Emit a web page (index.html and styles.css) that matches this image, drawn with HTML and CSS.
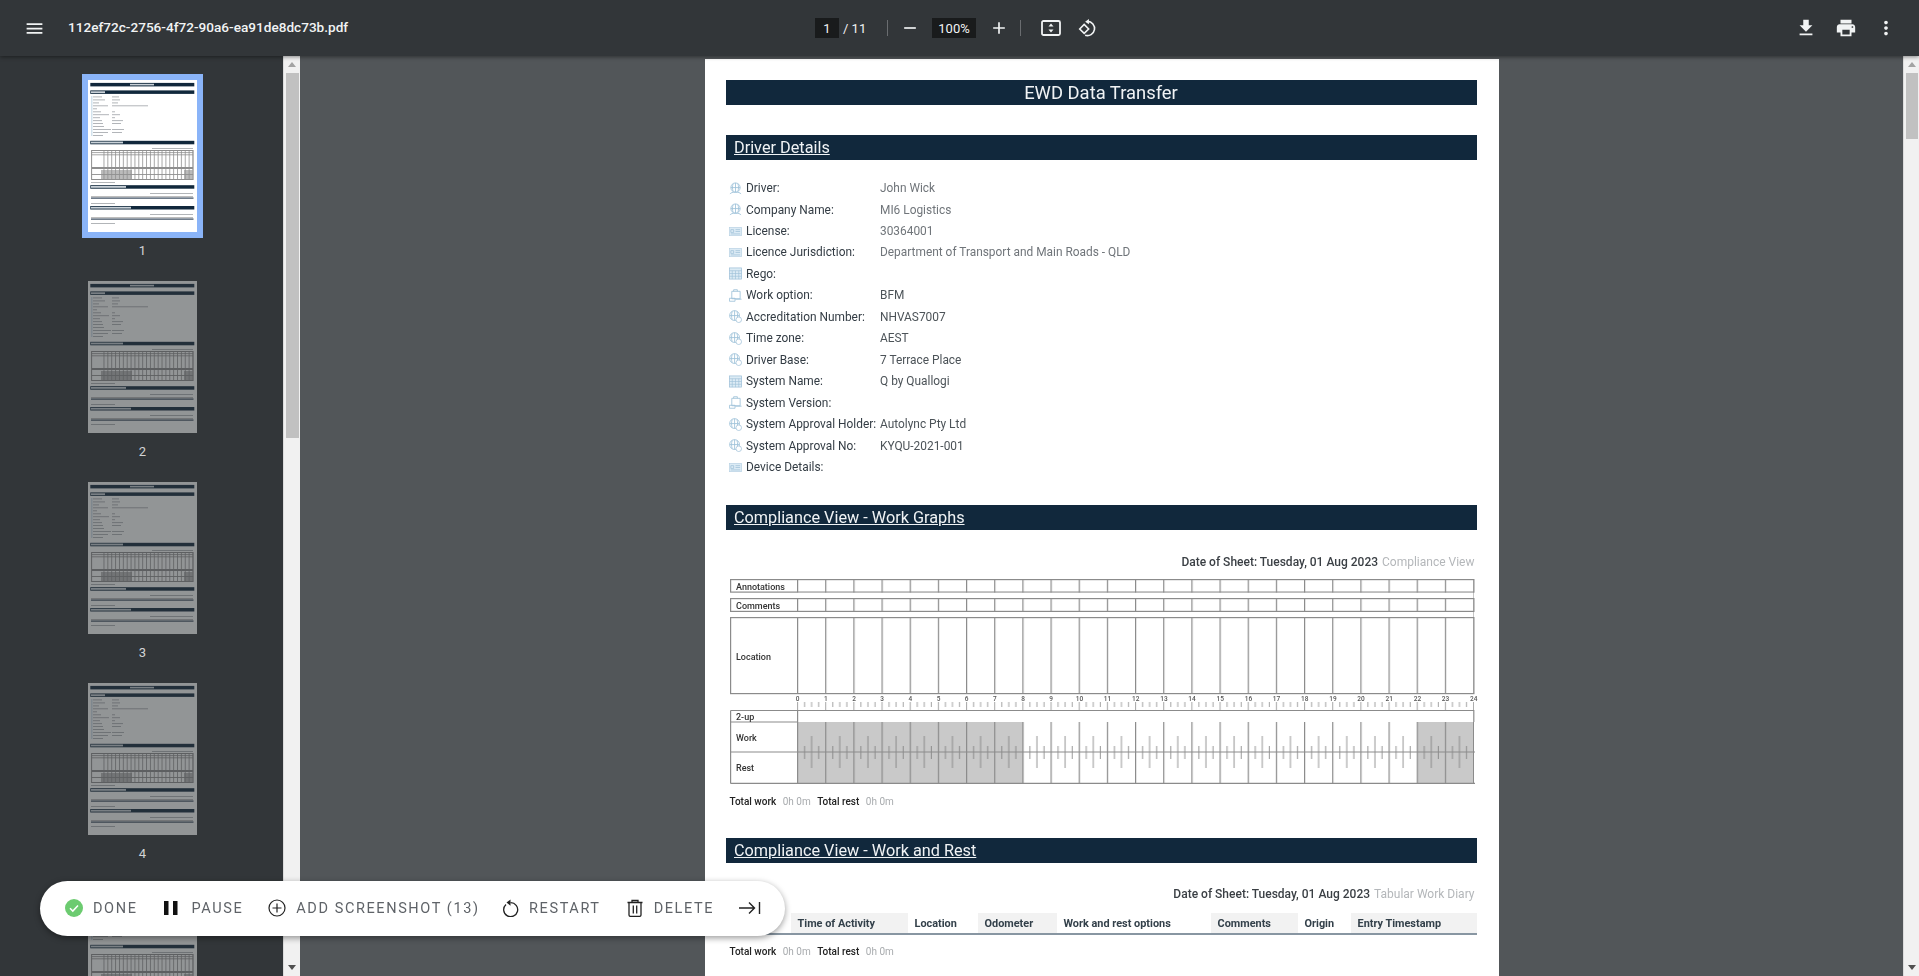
FILE: index.html
```html
<!DOCTYPE html>
<html lang="en">
<head>
<meta charset="utf-8">
<title>112ef72c-2756-4f72-90a6-ea91de8dc73b.pdf</title>
<link rel="stylesheet" href="styles.css">
</head>
<body>
<svg class="defs" width="0" height="0" aria-hidden="true">
  <defs>
    <symbol id="i-people" viewBox="0 0 14 14"><g fill="none" stroke="#9cc0d8" stroke-width=".9"><circle cx="7" cy="6" r="5"/><path d="M2 6h10M7 1v10M4.500 1.800c-1 2.600-1 5.800 0 8.400M9.500 1.800c1 2.600 1 5.800 0 8.400M1 13c1-1.600 3-2 6-2s5 .4 6 2"/></g></symbol>
    <symbol id="i-card" viewBox="0 0 14 14"><rect x=".5" y="2.500" width="13" height="9" fill="#dcebf5" stroke="#b5d0e2" stroke-width=".7"/><path d="M2 5h3v3H2zM7 5h5M7 7h5M2 9.600h10" fill="none" stroke="#9fc1d8" stroke-width=".8"/></symbol>
    <symbol id="i-grid" viewBox="0 0 14 14"><rect x=".5" y="1" width="13" height="12" fill="#dcebf5" stroke="#9fc1d8" stroke-width=".8"/><path d="M.5 4h13M3.500 4v9M7 4v9M10.500 4v9M.5 7h13M.5 10h13" fill="none" stroke="#9fc1d8" stroke-width=".7"/></symbol>
    <symbol id="i-case" viewBox="0 0 14 14"><path d="M5 2.500V.8h4v1.700M3 2.500h9v8H3zM.5 10h6v3.200h-6zM7 11h6.500" fill="none" stroke="#9cc0d8" stroke-width=".9"/></symbol>
    <symbol id="i-globe" viewBox="0 0 14 14"><g fill="none" stroke="#9cc0d8" stroke-width=".9"><circle cx="6" cy="6" r="5.300"/><path d="M.8 6h10.400M6 .7v10.600M3.500 1.500c-1 2.800-1 6.200 0 9M8.500 1.500c1 2.800 1 6.200 0 9"/></g><circle cx="10.500" cy="10.500" r="3" fill="#fff" stroke="#9fc1d8" stroke-width=".8"/></symbol>
    <pattern id="p-hour" x="67" y="0" width="28.167" height="220" patternUnits="userSpaceOnUse"><path d="M.6 0v220" stroke="#8b8b8b" stroke-width="1.200"/></pattern>
    <pattern id="p-ruler" x="67" y="0" width="28.167" height="8" patternUnits="userSpaceOnUse"><path d="M.6 0v8M7.600 3v5M14.600 3v5M21.700 3v5" stroke="#8b8b8b" stroke-width=".8"/></pattern>
    <pattern id="p-ticks" x="67" y="0" width="28.167" height="32" patternUnits="userSpaceOnUse"><path d="M7.600 10v13M14.600 0v32M21.700 10v13" stroke="#7a7a7a" stroke-width=".8"/></pattern>
    <pattern id="p-mini" x="0" y="0" width="3.87" height="40" patternUnits="userSpaceOnUse"><path d="M.5 0v40" stroke="#8e8e8e" stroke-width=".8"/></pattern>
    <symbol id="mini-page" viewBox="0 0 109 152">
      <rect width="109" height="152" fill="#fff"/>
      <g fill="#11283c">
        <rect x="2.300" y="2.900" width="104" height="3.500"/>
        <rect x="2.300" y="10.400" width="104" height="3.500"/>
        <rect x="2.300" y="60.800" width="104" height="3.500"/>
        <rect x="2.300" y="105.200" width="104" height="3.500"/>
        <rect x="2.300" y="126" width="104" height="3.500"/>
      </g>
      <g fill="#c9d1d8"><rect x="42" y="3.800" width="24" height="1.600"/><rect x="3" y="11.300" width="14" height="1.800"/><rect x="3" y="61.600" width="32" height="1.800"/><rect x="3" y="106" width="35" height="1.800"/><rect x="3" y="126.800" width="40" height="1.800"/></g>
      <path d="M5 16.900h9M24 16.900h7M5 19.900h12M24 19.900h8M5 22.900h6M24 22.900h6M5 25.800h15M24 25.800h36M5 28.800h4M5 31.800h8M24 31.800h3M5 34.700h16M24 34.700h8M5 37.700h7M24 37.700h3M5 40.600h9M24 40.600h11M5 43.500h10M24 43.500h9M5 46.500h11M5 49.500h18M24 49.500h12M5 52.500h15M24 52.500h10M5 55.500h10" stroke="#a9adb1" stroke-width=".9" fill="none"/>
      <path d="M3 16h1.500v40H3z" fill="#d3e3ee"/>
      <g fill="#b2b5b8">
        <rect x="64" y="68" width="41" height="1"/><rect x="62" y="113" width="43" height="1"/><rect x="62" y="134" width="43" height="1"/>
        <rect x="3" y="102" width="24" height="1"/><rect x="3" y="123" width="24" height="1"/><rect x="3" y="143" width="24" height="1"/>
      </g>
      <rect x="3.600" y="70.500" width="101.500" height="17" fill="none" stroke="#8e8e8e"/>
      <rect x="13" y="70.500" width="92" height="17" fill="url(#p-mini)"/>
      <path d="M3.600 72.600h101.500M3.600 74.800h101.500" stroke="#8e8e8e" stroke-width=".8"/>
      <rect x="3.600" y="88.500" width="101.500" height="11" fill="none" stroke="#8e8e8e"/>
      <rect x="13" y="90" width="31" height="9" fill="#bbb"/>
      <rect x="96" y="90" width="9" height="9" fill="#bbb"/>
      <rect x="13" y="89" width="92" height="10" fill="url(#p-mini)"/>
      <path d="M3.600 94.500h101.500" stroke="#8e8e8e" stroke-width=".9"/>
      <rect x="3" y="117.500" width="102.500" height="1.200" fill="#35475a"/>
      <rect x="3" y="138.500" width="102.500" height="1.200" fill="#35475a"/>
      <rect x="3" y="116" width="102" height="1" fill="#bdbdbd"/>
      <rect x="3" y="137" width="102" height="1" fill="#bdbdbd"/>
    </symbol>
  </defs>
</svg>

<header class="toolbar">
  <div class="tb-left">
    <svg class="tb-icon menu" viewBox="0 0 24 24"><path d="M3 18h18v-2H3v2zm0-5h18v-2H3v2zm0-7v2h18V6H3z"/></svg>
    <span class="title">112ef72c-2756-4f72-90a6-ea91de8dc73b.pdf</span>
  </div>
  <div class="tb-center">
    <span class="field page-field">1</span>
    <span class="page-total">/ 11</span>
    <span class="sep sep-a"></span>
    <svg class="tb-icon minus" viewBox="0 0 24 24"><path d="M19 13H5v-2h14v2z"/></svg>
    <span class="field zoom-field">100%</span>
    <svg class="tb-icon plus" viewBox="0 0 24 24"><path d="M19 13h-6v6h-2v-6H5v-2h6V5h2v6h6v2z"/></svg>
    <span class="sep sep-b"></span>
    <svg class="tb-icon fit" viewBox="0 0 20 16"><rect x="1" y="1" width="18" height="14" rx="1.500" fill="none" stroke="#f1f3f4" stroke-width="1.800"/><path d="M10 3.500 12.500 6.500h-5zM10 12.500 7.500 9.500h5z"/></svg>
    <svg class="tb-icon rotate" viewBox="0 0 20 20"><path d="M10 2.500a7.500 7.500 0 1 1 -2.500 14.600" fill="none" stroke="#f1f3f4" stroke-width="1.700"/><path d="M11.500 0v5.500l-4-2.700z"/><path d="M1.800 10.500 6.500 5.800l4.700 4.700-4.700 4.700z" fill="none" stroke="#f1f3f4" stroke-width="1.700"/></svg>
  </div>
  <div class="tb-right">
    <svg class="tb-icon act" viewBox="0 0 24 24"><path d="M19 9h-4V3H9v6H5l7 7 7-7zM5 18v2h14v-2H5z"/></svg>
    <svg class="tb-icon act" viewBox="0 0 24 24"><path d="M19 8H5c-1.660 0-3 1.340-3 3v6h4v4h12v-4h4v-6c0-1.660-1.340-3-3-3zm-3 11H8v-5h8v5zm3-7c-.55 0-1-.45-1-1s.45-1 1-1 1 .45 1 1-.45 1-1 1zm-1-9H6v4h12V3z"/></svg>
    <svg class="tb-icon act" viewBox="0 0 24 24"><path d="M12 8c1.100 0 2-.9 2-2s-.9-2-2-2-2 .9-2 2 .9 2 2 2zm0 2c-1.100 0-2 .9-2 2s.9 2 2 2 2-.9 2-2-.9-2-2-2zm0 6c-1.100 0-2 .9-2 2s.9 2 2 2 2-.9 2-2-.9-2-2-2z"/></svg>
  </div>
</header>

<div class="body-row">
  <aside class="sidebar">
    <figure class="thumb selected"><svg class="mini" viewBox="0 0 109 152"><use href="#mini-page"/></svg><figcaption>1</figcaption></figure>
    <figure class="thumb"><svg class="mini" viewBox="0 0 109 152"><use href="#mini-page"/></svg><figcaption>2</figcaption></figure>
    <figure class="thumb"><svg class="mini" viewBox="0 0 109 152"><use href="#mini-page"/></svg><figcaption>3</figcaption></figure>
    <figure class="thumb"><svg class="mini" viewBox="0 0 109 152"><use href="#mini-page"/></svg><figcaption>4</figcaption></figure>
    <figure class="thumb"><svg class="mini" viewBox="0 0 109 152"><use href="#mini-page"/></svg></figure>
  </aside>
  <div class="scrollbar side-scroll">
    <span class="arrow up"></span><span class="sb-thumb"></span><span class="sb-fill"></span><span class="arrow down"></span>
  </div>

  <main class="viewer">
    <article class="page">
      <h1 class="bar doc-title">EWD Data Transfer</h1>
      <h2 class="bar section first"><u>Driver Details</u></h2>
      <dl class="details">
        <div class="row"><svg class="ic"><use href="#i-people"/></svg><dt>Driver:</dt><dd>John Wick</dd></div>
        <div class="row"><svg class="ic"><use href="#i-people"/></svg><dt>Company Name:</dt><dd>MI6 Logistics</dd></div>
        <div class="row"><svg class="ic"><use href="#i-card"/></svg><dt>License:</dt><dd>30364001</dd></div>
        <div class="row"><svg class="ic"><use href="#i-card"/></svg><dt>Licence Jurisdiction:</dt><dd>Department of Transport and Main Roads - QLD</dd></div>
        <div class="row"><svg class="ic"><use href="#i-grid"/></svg><dt>Rego:</dt><dd></dd></div>
        <div class="row"><svg class="ic"><use href="#i-case"/></svg><dt>Work option:</dt><dd class="dark">BFM</dd></div>
        <div class="row"><svg class="ic"><use href="#i-globe"/></svg><dt>Accreditation Number:</dt><dd class="dark">NHVAS7007</dd></div>
        <div class="row"><svg class="ic"><use href="#i-globe"/></svg><dt>Time zone:</dt><dd class="dark">AEST</dd></div>
        <div class="row"><svg class="ic"><use href="#i-globe"/></svg><dt>Driver Base:</dt><dd class="dark">7 Terrace Place</dd></div>
        <div class="row"><svg class="ic"><use href="#i-grid"/></svg><dt>System Name:</dt><dd class="dark">Q by Quallogi</dd></div>
        <div class="row"><svg class="ic"><use href="#i-case"/></svg><dt>System Version:</dt><dd class="dark"></dd></div>
        <div class="row"><svg class="ic"><use href="#i-globe"/></svg><dt>System Approval Holder:</dt><dd class="dark">Autolync Pty Ltd</dd></div>
        <div class="row"><svg class="ic"><use href="#i-globe"/></svg><dt>System Approval No:</dt><dd class="dark">KYQU-2021-001</dd></div>
        <div class="row"><svg class="ic"><use href="#i-card"/></svg><dt>Device Details:</dt><dd class="dark"></dd></div>
      </dl>

      <h2 class="bar section graphs"><u>Compliance View - Work Graphs</u></h2>
      <p class="sheet-date graph-date">Date of Sheet: Tuesday, 01 Aug 2023 <span>Compliance View</span></p>
      <svg class="graph" width="748" height="212" viewBox="0 0 748 212">
        <g class="g-lines">
          <rect x=".6" y=".6" width="743.300" height="12.500"/>
          <rect x=".6" y="19.600" width="743.300" height="12.800"/>
          <rect x=".6" y="38.600" width="743.300" height="76"/>
        </g>
        <rect x="67" y="0" width="676.500" height="114.500" fill="url(#p-hour)"/>
        <rect x="67" y="13.800" width="676" height="5.200" fill="#fff"/>
        <rect x="67" y="33" width="676" height="5" fill="#fff"/>
        <rect x="67" y="123" width="677" height="8" fill="url(#p-ruler)"/>
        <g class="g-hours">
          <text x="67.700" y="122">0</text><text x="95.800" y="122">1</text><text x="124" y="122">2</text><text x="152.200" y="122">3</text><text x="180.400" y="122">4</text><text x="208.500" y="122">5</text><text x="236.700" y="122">6</text><text x="264.900" y="122">7</text><text x="293" y="122">8</text><text x="321.200" y="122">9</text><text x="349.400" y="122">10</text><text x="377.500" y="122">11</text><text x="405.700" y="122">12</text><text x="433.900" y="122">13</text><text x="462" y="122">14</text><text x="490.200" y="122">15</text><text x="518.400" y="122">16</text><text x="546.500" y="122">17</text><text x="574.700" y="122">18</text><text x="602.900" y="122">19</text><text x="631" y="122">20</text><text x="659.200" y="122">21</text><text x="687.400" y="122">22</text><text x="715.500" y="122">23</text><text x="743.700" y="122">24</text>
        </g>
        <rect x="67.500" y="143" width="225.900" height="61" fill="#c9c9c9"/>
        <rect x="687.300" y="143" width="56.300" height="61" fill="#c9c9c9"/>
        <rect x="67" y="143" width="677" height="61" fill="url(#p-hour)"/>
        <g transform="translate(0 157)"><rect x="67" y="0" width="677" height="32" fill="url(#p-ticks)"/></g>
        <g class="g-lines">
          <path d="M.6 131.500H744M.6 143H68M.6 131.500V204.500M67.600 131v12M743.800 131v12M.6 173H745M.6 204.300H745"/>
        </g>
        <g class="g-labels">
          <text x="6" y="10.500">Annotations</text><text x="6" y="29.500">Comments</text><text x="6" y="81">Location</text><text x="6" y="141">2-up</text><text x="6" y="162">Work</text><text x="6" y="192">Rest</text>
        </g>
      </svg>
      <p class="totals graph-total"><b>Total work</b><span>0h 0m</span><b>Total rest</b><span>0h 0m</span></p>

      <h2 class="bar section rest"><u>Compliance View - Work and Rest</u></h2>
      <p class="sheet-date rest-date">Date of Sheet: Tuesday, 01 Aug 2023 <span>Tabular Work Diary</span></p>
      <div class="tabular">
        <span class="col c0"></span>
        <span class="col c1 shade">Time of Activity</span>
        <span class="col c2">Location</span>
        <span class="col c3 shade">Odometer</span>
        <span class="col c4">Work and rest options</span>
        <span class="col c5 shade">Comments</span>
        <span class="col c6">Origin</span>
        <span class="col c7 shade">Entry Timestamp</span>
      </div>
      <p class="totals rest-total"><b>Total work</b><span>0h 0m</span><b>Total rest</b><span>0h 0m</span></p>
    </article>
  </main>

  <div class="scrollbar main-scroll">
    <span class="arrow up"></span><span class="sb-thumb"></span><span class="sb-fill"></span><span class="arrow down"></span>
  </div>
</div>

<nav class="recorder">
  <span class="rec-item wide"><svg class="rec-ic" viewBox="0 0 18 18"><circle cx="9" cy="9" r="9" fill="#6ccb70"/><path d="M5 9.300l2.800 2.800L13 6.500" fill="none" stroke="#fff" stroke-width="1.500"/></svg>DONE</span>
  <span class="rec-item"><svg class="rec-ic pause" viewBox="0 0 14 14"><path d="M0 0h4.500v14H0zM9 0h4.500v14H9z" fill="#111"/></svg>PAUSE</span>
  <span class="rec-item narrow"><svg class="rec-ic" viewBox="0 0 18 18"><circle cx="9" cy="9" r="8" fill="none" stroke="#222" stroke-width="1.200"/><path d="M9 4.500v9M4.500 9h9" stroke="#222" stroke-width="1.200"/></svg>ADD SCREENSHOT (13)</span>
  <span class="rec-item"><svg class="rec-ic" viewBox="0 0 18 18"><path d="M5 5.500a7 7 0 1 0 4.500-1.800" fill="none" stroke="#222" stroke-width="1.300"/><path d="M9.500 .5v6.200L5.500 3.600z" fill="#222"/></svg>RESTART</span>
  <span class="rec-item"><svg class="rec-ic" viewBox="0 0 18 18"><path d="M1.500 3.500h15M6 3.500V1.500h6v2M3 3.500v12.500c0 .8.600 1.400 1.400 1.400h9.200c.8 0 1.400-.6 1.400-1.400V3.500M7.300 6.500v8M10.700 6.500v8" fill="none" stroke="#222" stroke-width="1.300"/></svg>DELETE</span>
  <svg class="rec-ic collapse" viewBox="0 0 22 14"><path d="M0 7h15M10 1.500 15.500 7 10 12.500M20.500 1v12" fill="none" stroke="#222" stroke-width="1.400"/></svg>
</nav>
</body>
</html>
```

FILE: styles.css
```css
* { box-sizing: border-box; }
html, body { margin: 0; height: 100%; overflow: hidden; }
body {
  display: flex;
  flex-direction: column;
  width: 1919px;
  height: 976px;
  background: #525659;
  font-family: Roboto, "Liberation Sans", sans-serif;
  position: relative;
}
.defs { position: absolute; }

/* toolbar */
.toolbar {
  flex: 0 0 56px;
  display: flex;
  align-items: center;
  background: #323639;
  color: #f1f3f4;
  box-shadow: 0 1px 4px rgba(0, 0, 0, .45);
  position: relative;
  z-index: 2;
}
.tb-icon { fill: #f1f3f4; display: block; flex: none; }
.tb-left { flex: 0 0 815px; display: flex; align-items: center; padding-left: 24px; }
.menu { width: 21px; height: 21px; }
.title { margin-left: 23px; font-size: 13.600px; font-weight: 500; line-height: 1; }
.tb-center { flex: 1; display: flex; align-items: center; font-size: 13px; }
.field { background: #191b1c; height: 20px; display: flex; align-items: center; justify-content: center; }
.page-field { width: 24px; }
.page-total { margin-left: 4px; font-size: 13px; width: 24px; white-space: nowrap; }
.sep { width: 1px; height: 16px; background: #6a6d70; }
.sep-a { margin-left: 20px; }
.minus { width: 20px; height: 20px; margin-left: 12px; }
.zoom-field { width: 44px; margin-left: 12px; font-size: 13px; }
.plus { width: 20px; height: 20px; margin-left: 13px; }
.sep-b { margin-left: 11px; }
.fit { width: 20px; height: 16px; margin-left: 20px; }
.rotate { width: 19px; height: 19px; margin-left: 17px; }
.tb-right { display: flex; align-items: center; gap: 18px; padding-right: 22px; }
.act { width: 22px; height: 22px; }

/* layout */
.body-row { flex: 1; display: flex; min-height: 0; }

/* sidebar */
.sidebar {
  flex: 0 0 283px;
  background: #323639;
  padding: 24px 0 0 88px;
  overflow: hidden;
  display: flex;
  flex-direction: column;
  gap: 0;
}
.thumb { margin: 0; flex: 0 0 201px; width: 109px; }
.mini { display: block; width: 109px; height: 152px; opacity: .47; filter: blur(.4px); }
.selected .mini { opacity: 1; box-shadow: 0 0 0 6px #8ab4f8; }
.thumb figcaption { margin-top: 11px; text-align: center; font-size: 13px; line-height: 16px; color: #d2d4d6; }

/* scrollbars */
.scrollbar {
  flex: none;
  display: flex;
  flex-direction: column;
  align-items: center;
  background: #f1f1f1;
  border-left: 1px solid #dcdcdc;
}
.side-scroll { width: 17px; }
.main-scroll { width: 16px; }
.arrow { flex: 0 0 17px; width: 0; height: 17px; border-left: 4px solid transparent; border-right: 4px solid transparent; }
.arrow.up { border-bottom: 5px solid #a3a3a3; border-top: 0; flex-basis: 5px; height: 5px; margin: 6px 0; }
.arrow.down { border-top: 5px solid #505050; border-bottom: 0; flex-basis: 5px; height: 5px; margin: 6px 0; }
.sb-thumb { width: 13px; background: #c1c1c1; }
.side-scroll .sb-thumb { height: 365px; }
.main-scroll .sb-thumb { width: 12px; height: 66px; }
.sb-fill { flex: 1; }

/* viewer */
.viewer { flex: 1; min-width: 0; display: flex; justify-content: center; padding-top: 3px; overflow: hidden; }
.page {
  width: 794px;
  height: 1123px;
  flex: none;
  background: #fff;
  padding: 21px 22px 0 21px;
  color: #333;
  font-size: 11.900px;
  filter: blur(.3px);
}
.bar {
  margin: 0;
  height: 25px;
  background: #11283c;
  color: #f0f3f5;
  font-weight: 400;
  display: flex;
  align-items: center;
}
.doc-title { justify-content: center; font-size: 18.400px; }
.section { font-size: 16.250px; padding-left: 8.500px; }
.section.first { margin-top: 30px; }
.section.graphs { margin-top: 27.600px; }
.section.rest { margin-top: 30px; }

/* details */
.details { margin: 17.400px 0 0; padding-left: 3px; }
.row { display: flex; align-items: center; height: 21.460px; }
.ic { width: 13px; height: 13px; flex: none; }
dt { margin-left: 4.500px; width: 134px; flex: none; color: #333c44; white-space: nowrap; }
dd { margin: 0; color: #70757a; }
dd.dark { color: #4c5358; }

/* sheet meta */
.sheet-date { margin: 0; text-align: right; font-size: 12px; font-weight: 500; color: #3a3f44; padding-right: 2px; }
.sheet-date span { margin-left: 1px; font-weight: 400; color: #b4b7ba; }
.graph-date { margin-top: 24px; line-height: 16px; }
.rest-date { margin-top: 23px; line-height: 16px; }
.graph { display: block; margin: 9px 0 0 4px; overflow: visible; }
.g-lines { fill: none; stroke: #8b8b8b; stroke-width: 1.200; }
.g-hours text { font: 500 6.500px Roboto, sans-serif; fill: #555; text-anchor: middle; }
.g-labels text { font: 500 9px Roboto, sans-serif; fill: #333; }
.totals { margin: 0; display: flex; gap: 6.500px; padding-left: 4px; font-size: 10px; line-height: 12px; }
.totals b { font-weight: 500; color: #222; }
.totals span { color: #a8abae; }
.graph-total { margin-top: 5px; }

/* tabular */
.tabular { display: flex; height: 22px; margin-top: 11px; border-bottom: 2px solid #8896a2; font-size: 10.900px; font-weight: 700; color: #33404a; }
.col { display: flex; align-items: center; padding-left: 7px; }
.shade { background: #f2f2f2; }
.c0 { width: 65px; } .c1 { width: 117px; } .c2 { width: 70px; } .c3 { width: 79px; } .c4 { width: 154px; } .c5 { width: 87px; } .c6 { width: 53px; } .c7 { flex: 1; }
.rest-total { margin-top: 11px; }

/* recorder overlay */
.recorder {
  position: absolute;
  left: 40px;
  top: 881px;
  width: 745px;
  height: 55px;
  background: #fff;
  border-radius: 28px;
  box-shadow: 0 2px 6px rgba(0, 0, 0, .4);
  display: flex;
  align-items: center;
  padding: 0 0 1px 25px;
  z-index: 5;
  filter: blur(.25px);
}
.rec-item { display: flex; align-items: center; gap: 10px; font-size: 14.500px; letter-spacing: 1.600px; color: #5f6368; margin-right: 25px; white-space: nowrap; }
.rec-item.wide { margin-right: 27px; }
.rec-item.narrow { margin-right: 21.500px; }
.rec-ic { width: 18px; height: 18px; flex: none; }
.pause { width: 14px; height: 14px; margin-right: 3px; }
.collapse { width: 22px; height: 14px; }
```
